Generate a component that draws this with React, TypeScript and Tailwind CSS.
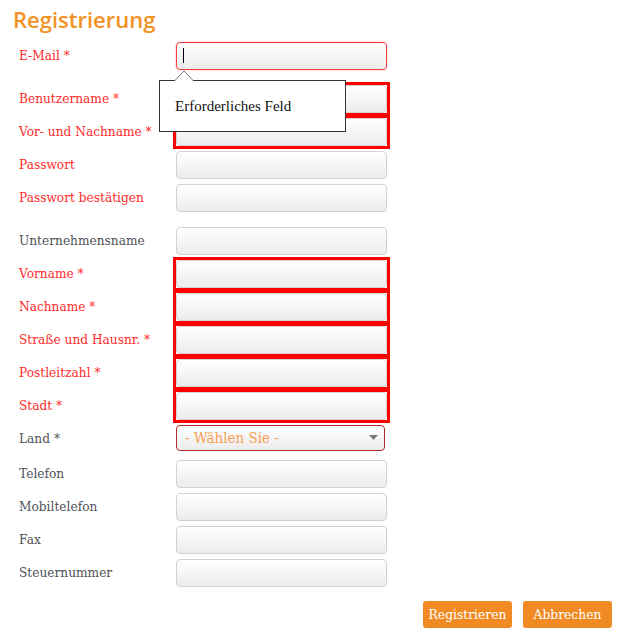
import React from "react";

type Field = {
  label: string;
  tone: "red" | "dark";
  invalid?: boolean;
  gapBefore?: number;
  focus?: boolean;
};

const fields: Field[] = [
  { label: "E-Mail *", tone: "red", focus: true },
  { label: "Benutzername *", tone: "red", invalid: true, gapBefore: 10 },
  { label: "Vor- und Nachname *", tone: "red", invalid: true },
  { label: "Passwort", tone: "red" },
  { label: "Passwort bestätigen", tone: "red" },
  { label: "Unternehmensname", tone: "dark", gapBefore: 10 },
  { label: "Vorname *", tone: "red", invalid: true },
  { label: "Nachname *", tone: "red", invalid: true },
  { label: "Straße und Hausnr. *", tone: "red", invalid: true },
  { label: "Postleitzahl *", tone: "red", invalid: true },
  { label: "Stadt *", tone: "red", invalid: true },
];

const tail = ["Telefon", "Mobiltelefon", "Fax", "Steuernummer"];

const labelFont = { fontFamily: "'DejaVu Serif', serif" };

function Input({ invalid, focus }: { invalid?: boolean; focus?: boolean }) {
  let cls =
    "relative w-[211px] h-[28px] rounded-[4px] border bg-gradient-to-b from-white to-[#ececec] ";
  if (focus) cls += "border-[#f04040] shadow-[0_0_2px_rgba(255,60,60,0.5)]";
  else cls += "border-[#d2d2d2]";
  const box = (
    <div className={cls}>
      {focus && <span className="absolute left-[6px] top-[5px] w-px h-[15px] bg-black" />}
    </div>
  );
  // invalid fields get a square red frame drawn round the rounded input
  if (invalid)
    return <div className="-m-[3px] h-[34px] border-[3px] border-[#ff0000]">{box}</div>;
  return box;
}

function Row({ f }: { f: Field }) {
  return (
    <div className="flex h-[33px]" style={{ marginTop: f.gapBefore ?? 0 }}>
      <label
        className={
          "w-[157px] h-[28px] flex items-center text-[12.2px] " +
          (f.tone === "red" ? "text-[#ff2b2b]" : "text-[#4f5257]")
        }
        style={labelFont}
      >
        {f.label}
      </label>
      <Input invalid={f.invalid} focus={f.focus} />
    </div>
  );
}

export default function App() {
  return (
    <div className="relative w-[632px] h-[643px] bg-white">
      <h1
        className="pl-[13px] h-[42px] pt-[3px] text-[22px] font-semibold text-[#f39224] leading-[32px]"
        style={{ fontFamily: "'Open Sans', sans-serif" }}
      >
        Registrierung
      </h1>

      <div className="pl-[19px]">
        {fields.map((f) => (
          <Row key={f.label} f={f} />
        ))}

        {/* Land select */}
        <div className="flex h-[35px]">
          <label
            className="w-[157px] h-[28px] flex items-center text-[12.2px] text-[#4f5257]"
            style={labelFont}
          >
            Land *
          </label>
          <div className="w-[209px] h-[26px] rounded-[4px] border border-[#b52a2a] bg-gradient-to-b from-white to-[#ececec] flex items-center justify-between pl-[8px] pr-[6px]">
            <span
              className="text-[15px] text-[#f5a058]"
              style={{ fontFamily: "'DejaVu Serif', serif", fontStretch: "condensed" }}
            >
              - Wählen Sie -
            </span>
            <svg width="9" height="6" viewBox="0 0 9 6">
              <path d="M0 0 L9 0 L4.5 5 Z" fill="#7a7a7a" />
            </svg>
          </div>
        </div>

        {tail.map((t) => (
          <Row key={t} f={{ label: t, tone: "dark" }} />
        ))}
      </div>

      <div className="flex justify-end gap-[11px] pr-[20px] mt-[9px]">
        <button
          className="w-[89px] h-[27px] pt-[2px] rounded-[3px] bg-[#f18a22] text-white text-[12.3px]"
          style={labelFont}
        >
          Registrieren
        </button>
        <button
          className="w-[89px] h-[27px] pt-[2px] rounded-[3px] bg-[#f18a22] text-white text-[12.3px]"
          style={labelFont}
        >
          Abbrechen
        </button>
      </div>

      {/* validation tooltip */}
      <div className="absolute left-[159px] top-[80px] w-[187px] h-[52px] bg-white border border-[#333] flex items-center pl-[15px]">
        <svg
          className="absolute left-[14px] top-[-11px]"
          width="22"
          height="12"
          viewBox="0 0 22 12"
        >
          <path d="M0 11.5 L10 1 L20 11.5" fill="white" stroke="#777" strokeWidth="1" />
          <rect x="1" y="11" width="19" height="2" fill="white" />
        </svg>
        <span
          className="text-[15px] text-[#111]"
          style={{ fontFamily: "'Liberation Serif', serif" }}
        >
          Erforderliches Feld
        </span>
      </div>
    </div>
  );
}
